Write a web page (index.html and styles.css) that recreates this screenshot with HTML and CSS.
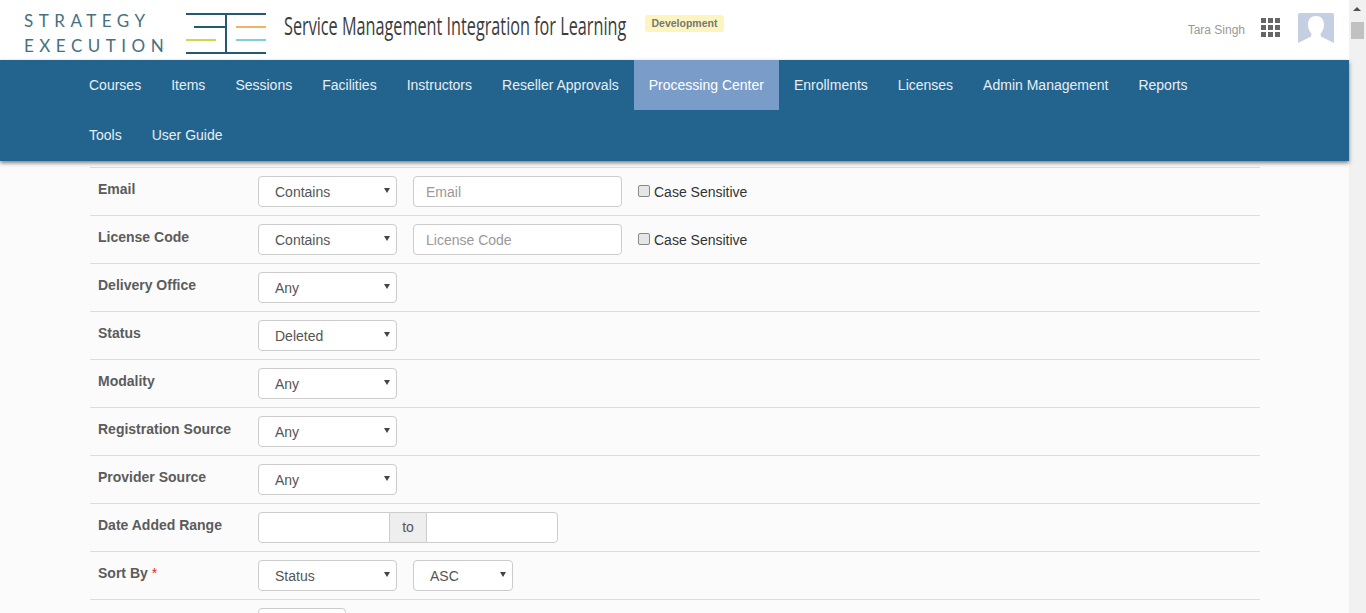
FILE: index.html
```html
<!DOCTYPE html>
<html lang="en">
<head>
    <meta charset="UTF-8">
    <title>Service Management Integration for Learning</title>
    <link rel="stylesheet" href="styles.css">
</head>
<body>
    <div class="page">
        <div class="main">
            <header class="topbar">
                <div class="logo">
                    <div class="logo-text">
                        <span>STRATEGY</span>
                        <span>EXECUTION</span>
                    </div>
                    <svg class="logo-mark" width="80" height="41" viewBox="0 0 80 41">
                        <g fill="none" stroke-width="2">
                            <path stroke="#235a70" d="M0 1H80M0 40H80M40 1V40M8 14H40"/>
                            <path stroke="#f4b266" d="M50 14H80"/>
                            <path stroke="#cfd64e" d="M0 27H30"/>
                            <path stroke="#7fd0dc" d="M50 27H80"/>
                        </g>
                    </svg>
                </div>
                <span class="app-title">Service Management Integration for Learning</span>
                <span class="env-badge">Development</span>
                <div class="user-area">
                    <span class="user-name">Tara Singh</span>
                    <div class="apps-grid">
                        <i></i><i></i><i></i><i></i><i></i><i></i><i></i><i></i><i></i>
                    </div>
                    <svg class="avatar" width="36" height="32" viewBox="0 0 36 32">
                        <rect width="36" height="32" rx="2" fill="#c5cfe2"/>
                        <path fill="#fff" d="M18 3c5 0 8 3 8 9 0 4-2 7-3.500 9 0 2 .5 3 2.500 3.500L36 30v2H0v-2l11-5.500c2-.5 2.500-1.500 2.500-3.500C12 19 10 16 10 12c0-6 3-9 8-9z"/>
                    </svg>
                </div>
            </header>

            <nav class="mainnav">
                <a href="#">Courses</a>
                <a href="#">Items</a>
                <a href="#">Sessions</a>
                <a href="#">Facilities</a>
                <a href="#">Instructors</a>
                <a href="#">Reseller Approvals</a>
                <a href="#" class="active">Processing Center</a>
                <a href="#">Enrollments</a>
                <a href="#">Licenses</a>
                <a href="#">Admin Management</a>
                <a href="#">Reports</a>
                <a href="#">Tools</a>
                <a href="#">User Guide</a>
            </nav>

            <form class="filters">
                <div class="row">
                    <label class="row-label">Email</label>
                    <div class="select-wrap"><select><option>Contains</option></select></div>
                    <input class="text-input" type="text" placeholder="Email">
                    <label class="check"><input type="checkbox"> Case Sensitive</label>
                </div>
                <div class="row">
                    <label class="row-label">License Code</label>
                    <div class="select-wrap"><select><option>Contains</option></select></div>
                    <input class="text-input" type="text" placeholder="License Code">
                    <label class="check"><input type="checkbox"> Case Sensitive</label>
                </div>
                <div class="row">
                    <label class="row-label">Delivery Office</label>
                    <div class="select-wrap"><select><option>Any</option></select></div>
                </div>
                <div class="row">
                    <label class="row-label">Status</label>
                    <div class="select-wrap"><select><option>Deleted</option></select></div>
                </div>
                <div class="row">
                    <label class="row-label">Modality</label>
                    <div class="select-wrap"><select><option>Any</option></select></div>
                </div>
                <div class="row">
                    <label class="row-label">Registration Source</label>
                    <div class="select-wrap"><select><option>Any</option></select></div>
                </div>
                <div class="row">
                    <label class="row-label">Provider Source</label>
                    <div class="select-wrap"><select><option>Any</option></select></div>
                </div>
                <div class="row">
                    <label class="row-label">Date Added Range</label>
                    <div class="date-range">
                        <input type="text">
                        <span>to</span>
                        <input type="text">
                    </div>
                </div>
                <div class="row">
                    <label class="row-label">Sort By <em>*</em></label>
                    <div class="select-wrap"><select><option>Status</option></select></div>
                    <div class="select-wrap small"><select><option>ASC</option></select></div>
                </div>
                <div class="row">
                    <div class="row-label"></div>
                    <div class="select-wrap tiny"><select><option></option></select></div>
                </div>
            </form>
        </div>

        <div class="scrollbar">
            <div class="scroll-btn"></div>
            <div class="scroll-thumb"></div>
        </div>
    </div>
</body>
</html>
```

FILE: styles.css
```css
html, body {
    margin: 0;
    padding: 0;
    height: 100%;
    overflow: hidden;
}

body {
    font-family: "Liberation Sans", Arial, sans-serif;
    font-size: 14px;
    color: #555;
    background-color: #fbfbfb;
}

.page {
    display: flex;
    height: 613px;
    overflow: hidden;
}

.main {
    flex: 1;
    min-width: 0;
}

/* top white bar */
.topbar {
    display: flex;
    align-items: center;
    height: 60px;
    background-color: white;
}

.logo {
    display: flex;
    align-items: center;
    margin-left: 24px;
}

.logo-text {
    display: flex;
    flex-direction: column;
    gap: 8px;
    width: 162px;
    margin-top: 6px;
    font-family: Lato, sans-serif;
    font-size: 17px;
    line-height: 17px;
    letter-spacing: 5.5px;
    color: #47707f;
    white-space: nowrap;
}

.logo-mark {
    margin-top: 7px;
}

/* no condensed font here, so squeeze it */
.app-title {
    width: 342px;
    margin-left: 18px;
    margin-bottom: 11px;
    font-family: "Open Sans", sans-serif;
    font-size: 25px;
    color: #3c3c3c;
    white-space: nowrap;
    transform: scaleX(0.649);
    transform-origin: left center;
}

.env-badge {
    margin-left: 19px;
    margin-bottom: 13px;
    padding: 1px 6.500px;
    font-size: 10.500px;
    font-weight: bold;
    line-height: 15px;
    color: #777;
    background-color: #fdf5c0;
    border-radius: 3px;
}

.user-area {
    display: flex;
    align-items: center;
    margin-left: auto;
    margin-right: 15px;
}

.user-name {
    margin-right: 1px;
    font-size: 12px;
    color: #999;
}

.apps-grid {
    display: grid;
    grid-template-columns: repeat(3, 5px);
    grid-auto-rows: 5px;
    gap: 2px;
    margin-left: 15px;
    margin-bottom: 5px;
}

.apps-grid i {
    background-color: #666;
}

.avatar {
    margin-left: 18px;
    margin-bottom: 3px;
}

/* blue nav */
.mainnav {
    display: flex;
    flex-wrap: wrap;
    position: relative;
    padding: 0 89px 1px 74px;
    background-color: #23648f;
    box-shadow: 0 2px 4px rgba(0,0,0,0.5);
}

.mainnav a {
    padding: 0 15px;
    line-height: 50px;
    font-size: 14px;
    color: #e8eef3;
    text-decoration: none;
}

.mainnav a.active {
    background-color: #7a9cc9;
    color: white;
}

/* filter rows */
.filters {
    margin: 6px 89px 0 90px;
}

.row {
    display: flex;
    align-items: flex-start;
    height: 39px;
    border-top: 1px solid #ddd;
    padding-top: 8px;
}

.row-label {
    width: 160px;
    padding-left: 8px;
    padding-top: 5px;
    font-weight: bold;
    color: #5c5c5c;
}

.row-label em {
    font-style: normal;
    font-weight: normal;
    color: #d9262c;
}

.select-wrap {
    position: relative;
    width: 139px;
    height: 31px;
}

.select-wrap.small {
    width: 100px;
    margin-left: 16px;
}

.select-wrap.tiny {
    width: 88px;
}

.select-wrap::after {
    content: "";
    position: absolute;
    top: 12px;
    right: 7px;
    border-left: 3px solid transparent;
    border-right: 3px solid transparent;
    border-top: 5px solid #444;
}

.select-wrap select {
    appearance: none;
    width: 100%;
    height: 100%;
    padding: 0 16px;
    font-family: inherit;
    font-size: 14px;
    color: #555;
    background-color: white;
    border: 1px solid #ccc;
    border-radius: 4px;
}

.text-input {
    width: 209px;
    height: 31px;
    box-sizing: border-box;
    margin-left: 16px;
    padding: 0 12px;
    font-family: inherit;
    font-size: 14px;
    color: #555;
    background-color: white;
    border: 1px solid #ccc;
    border-radius: 4px;
}

.text-input::placeholder {
    color: #999;
}

.check {
    display: flex;
    align-items: center;
    gap: 4px;
    height: 31px;
    margin-left: 16px;
    color: #333;
}

.check input {
    appearance: none;
    box-sizing: border-box;
    width: 12px;
    height: 12px;
    margin: 0 0 2px 0;
    background-color: #e6e6e6;
    border: 1px solid #888;
    border-radius: 2px;
}

.date-range {
    display: flex;
    width: 300px;
    height: 31px;
}

.date-range input {
    flex: 1;
    min-width: 0;
    box-sizing: border-box;
    background-color: white;
    border: 1px solid #ccc;
    border-radius: 4px 0 0 4px;
}

.date-range input:last-child {
    border-radius: 0 4px 4px 0;
}

.date-range span {
    width: 36px;
    flex-shrink: 0;
    text-align: center;
    color: #555;
    background-color: #eee;
    border-top: 1px solid #ccc;
    border-bottom: 1px solid #ccc;
    box-sizing: border-box;
    line-height: 29px;
}

/* fake scrollbar, the page itself doesn't scroll */
.scrollbar {
    width: 17px;
    background-color: #f1f1f1;
    flex-shrink: 0;
}

.scroll-btn {
    height: 17px;
    position: relative;
}

.scroll-btn::after {
    content: "";
    position: absolute;
    left: 4px;
    top: 7px;
    border-left: 4px solid transparent;
    border-right: 4px solid transparent;
    border-bottom: 4px solid #505050;
}

.scroll-thumb {
    height: 17px;
    margin: 5px 2px 0 2px;
    background-color: #c1c1c1;
}
```
